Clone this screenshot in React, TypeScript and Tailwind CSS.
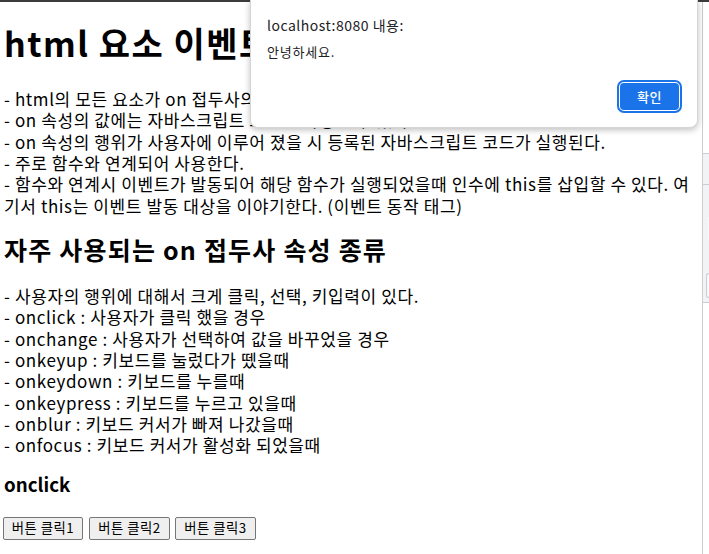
import React from "react";

const lines1 = [
  "- html의 모든 요소가 on 접두사의 속성을 가지고 있다.",
  "- on 속성의 값에는 자바스크립트 코드를 작성할 수 있다.",
  "- on 속성의 행위가 사용자에 이루어 졌을 시 등록된 자바스크립트 코드가 실행된다.",
  "- 주로 함수와 연계되어 사용한다.",
  "- 함수와 연계시 이벤트가 발동되어 해당 함수가 실행되었을때 인수에 this를 삽입할 수 있다. 여",
  "기서 this는 이벤트 발동 대상을 이야기한다. (이벤트 동작 태그)",
];

const lines2 = [
  "- 사용자의 행위에 대해서 크게 클릭, 선택, 키입력이 있다.",
  "- onclick : 사용자가 클릭 했을 경우",
  "- onchange : 사용자가 선택하여 값을 바꾸었을 경우",
  "- onkeyup : 키보드를 눌렀다가 뗐을때",
  "- onkeydown : 키보드를 누를때",
  "- onkeypress : 키보드를 누르고 있을때",
  "- onblur : 키보드 커서가 빠져 나갔을때",
  "- onfocus : 키보드 커서가 활성화 되었을때",
];

export default function App() {
  return (
    <div className="relative h-[554px] w-[709px] overflow-hidden bg-white font-[family-name:'Noto_Sans_CJK_KR',sans-serif] text-black">
      <div className="h-[2px] bg-[#3c3c3c]" />
      <div className="flex h-[552px]">
        <div className="flex w-[702px] flex-col overflow-hidden whitespace-nowrap pl-[4px] pt-[20px]">
          <h1 className="h-[42px] text-[34px] font-bold leading-[42px] tracking-[1.5px]">html 요소 이벤트</h1>
          <div className="mt-[24px] text-[17px] leading-[21.33px] tracking-[0.6px]">
            {lines1.map((l, i) => (
              <div key={i}>{l}</div>
            ))}
          </div>
          <h2 className="mt-[17px] h-[32px] text-[25px] font-bold leading-[32px] tracking-[1.2px]">
            자주 사용되는 on 접두사 속성 종류
          </h2>
          <div className="mt-[20px] text-[17px] leading-[21.33px] tracking-[0.6px]">
            {lines2.map((l, i) => (
              <div key={i}>{l}</div>
            ))}
          </div>
          <h3 className="mt-[15px] h-[25px] text-[18.72px] font-bold leading-[25px]">onclick</h3>
          <div className="-ml-px mt-[21px] flex">
            <button className="flex h-[23px] w-[80px] items-center justify-center rounded-[2px] border border-[#767676] bg-[#efefef] text-[13.33px] leading-none tracking-[0.5px]">
              버튼 클릭1
            </button>
            <button className="ml-[6px] flex h-[23px] w-[81px] items-center justify-center rounded-[2px] border border-[#767676] bg-[#efefef] text-[13.33px] leading-none tracking-[0.5px]">
              버튼 클릭2
            </button>
            <button className="ml-[5px] flex h-[23px] w-[81px] items-center justify-center rounded-[2px] border border-[#767676] bg-[#efefef] text-[13.33px] leading-none tracking-[0.5px]">
              버튼 클릭3
            </button>
          </div>
        </div>
        <div className="flex w-[7px] flex-col border-l border-[#cacdd1] bg-white">
          <div className="mt-[151px] h-[32px] border-y border-[#cacdd1] bg-[#f1f3f4]" />
          <div className="flex h-[118px] flex-col border-b border-[#cacdd1] bg-[#f1f3f4]">
            <div className="ml-[5px] mt-[32px] h-[23px] bg-[#f8f9fa]" />
            <div className="ml-[3px] mt-[33px] h-[25px] rounded-l-[3px] border border-r-0 border-[#cacdd1] bg-[#f8f9fa]" />
          </div>
        </div>
      </div>

      <div className="absolute left-[250px] top-0 flex h-[128px] w-[448px] flex-col rounded-b-[8px] border border-t-0 border-[#d6d6d6] bg-white pl-[16px] shadow-[0_2px_6px_rgba(0,0,0,0.25)]">
        <div className="mt-[15px] h-[20px] text-[14px] leading-[20px] tracking-[0.5px] text-[#202124]">localhost:8080 내용:</div>
        <div className="mt-[8px] h-[18px] text-[13px] leading-[18px] tracking-[0.8px] text-[#202124]">안녕하세요.</div>
        <div className="mt-[22px] flex justify-end pr-[18px]">
          <button className="flex h-[27px] w-[59px] items-center justify-center rounded-[4px] bg-[#1a73e8] text-[13px] font-medium leading-none tracking-[0.5px] text-white outline-2 outline-offset-1 outline-[#1a73e8]">
            확인
          </button>
        </div>
      </div>
    </div>
  );
}
